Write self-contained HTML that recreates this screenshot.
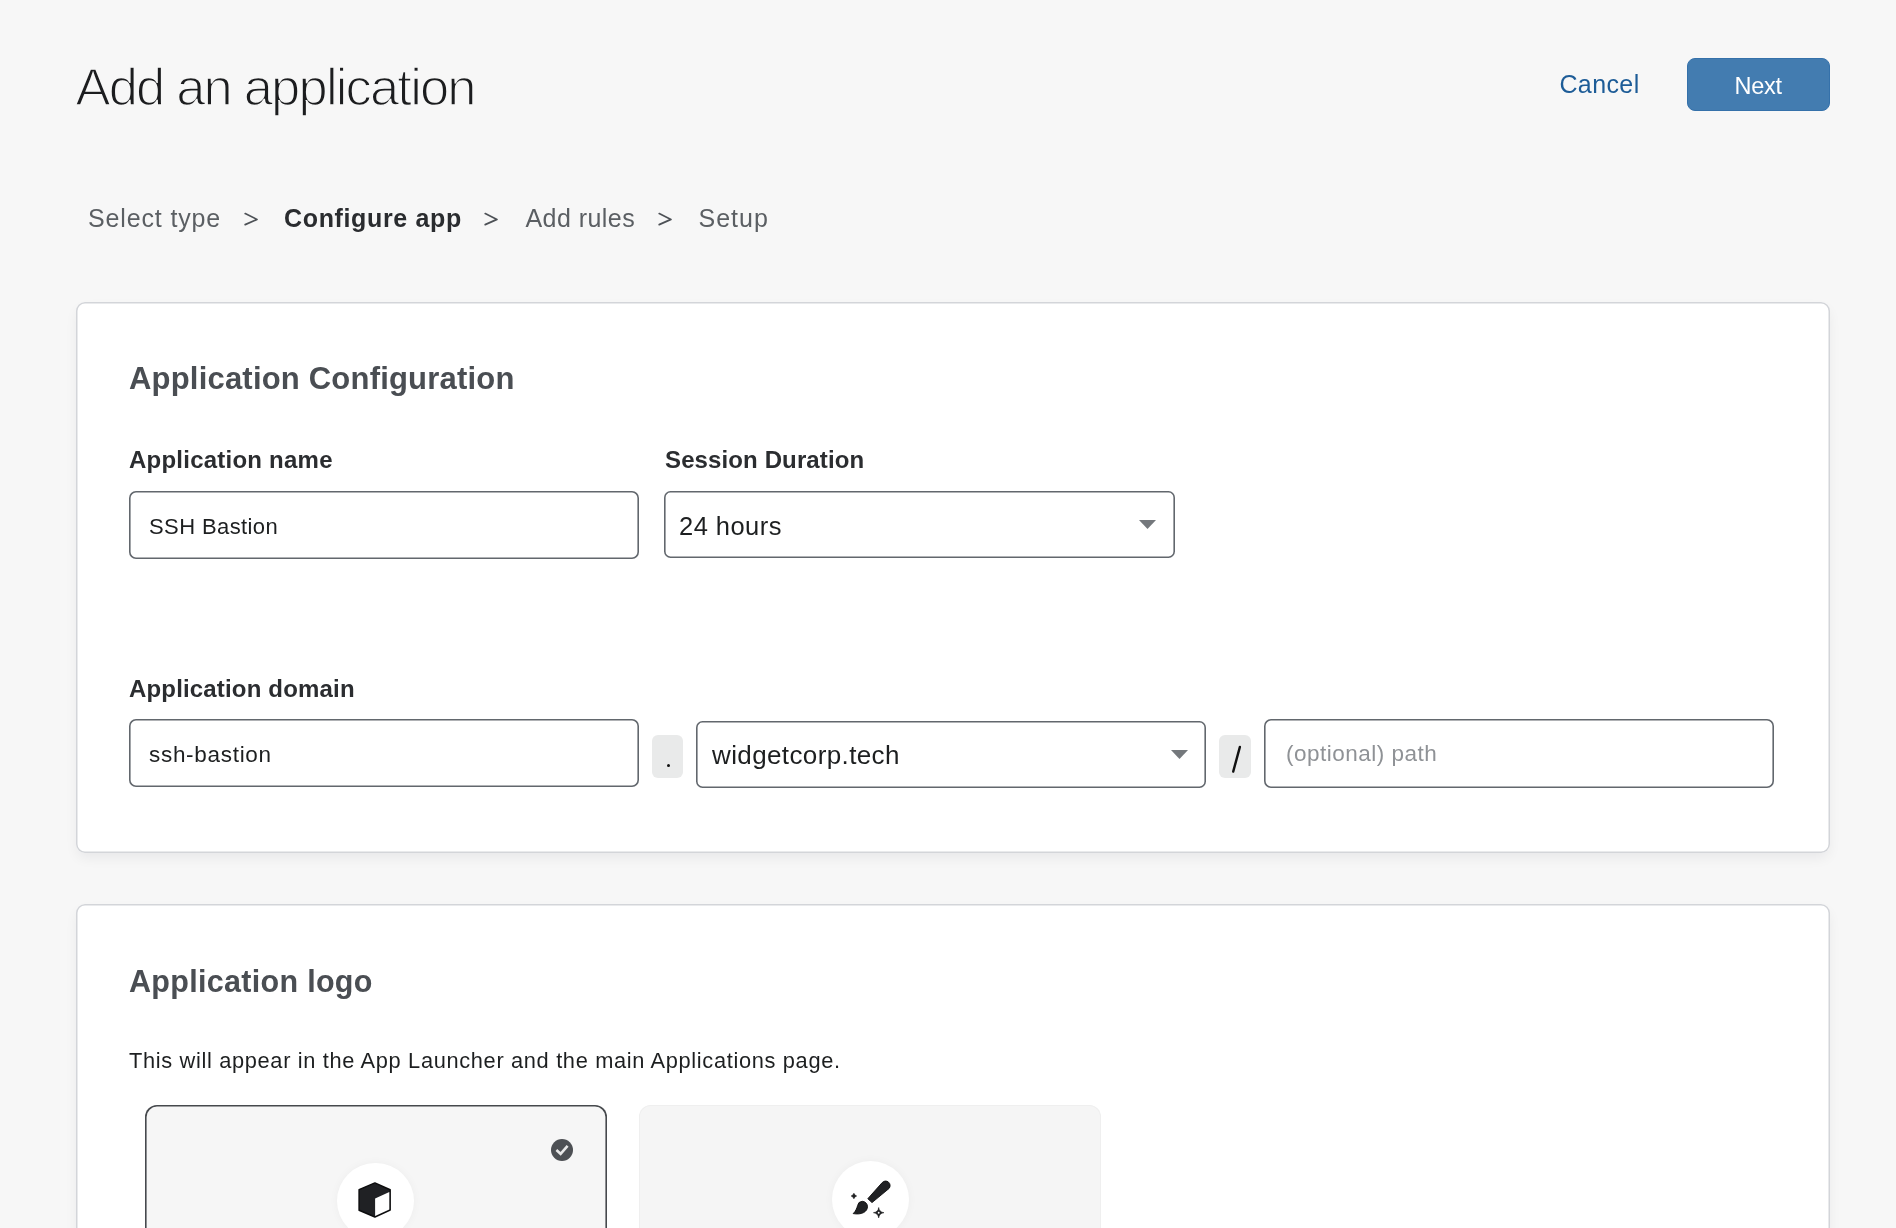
<!DOCTYPE html>
<html>
<head>
<meta charset="utf-8">
<style>
html,body{margin:0;padding:0;}
body{width:1896px;height:1228px;background:#f7f7f7;position:relative;overflow:hidden;will-change:transform;font-family:"Liberation Sans",sans-serif;}
.t{position:absolute;white-space:nowrap;line-height:1;}
.b{font-weight:bold;}
.box{position:absolute;box-sizing:border-box;}
</style>
</head>
<body>
<!-- header -->
<div class="t" id="title" style="left:75.5px;top:60.8px;font-size:52.5px;letter-spacing:-1.82px;color:#1c1d1f;-webkit-text-stroke:1.5px #f7f7f7;paint-order:normal;">Add an application</div>
<div class="t" id="cancel" style="left:1559.4px;top:72.3px;font-size:25px;letter-spacing:0.4px;color:#1d5c97;">Cancel</div>
<div class="box" id="nextbtn" style="left:1687px;top:58.3px;width:143px;height:52.6px;background:#437cb0;border:1px solid #3571aa;border-radius:8px;"></div>
<div class="t" id="next" style="left:1734.5px;top:75px;font-size:23.5px;letter-spacing:-0.25px;color:#ffffff;">Next</div>

<!-- breadcrumb -->
<div class="t" style="left:88px;top:205.6px;font-size:25px;letter-spacing:0.85px;color:#5b5f63;">Select type</div>
<svg class="box" style="left:242.9px;top:212px;" width="16" height="14" viewBox="0 0 16 14"><polyline points="2.2,1.6 14.0,7.4 2.2,12.6" fill="none" stroke="#4d5156" stroke-width="1.7" stroke-linecap="round" stroke-linejoin="round"/></svg>
<div class="t b" style="left:284px;top:205.6px;font-size:25px;letter-spacing:0.65px;color:#2a2c2f;">Configure app</div>
<svg class="box" style="left:482.7px;top:212px;" width="16" height="14" viewBox="0 0 16 14"><polyline points="2.2,1.6 14.0,7.4 2.2,12.6" fill="none" stroke="#4d5156" stroke-width="1.7" stroke-linecap="round" stroke-linejoin="round"/></svg>
<div class="t" style="left:525.5px;top:205.6px;font-size:25px;letter-spacing:0.45px;color:#5b5f63;">Add rules</div>
<svg class="box" style="left:656.7px;top:212px;" width="16" height="14" viewBox="0 0 16 14"><polyline points="2.2,1.6 14.0,7.4 2.2,12.6" fill="none" stroke="#4d5156" stroke-width="1.7" stroke-linecap="round" stroke-linejoin="round"/></svg>
<div class="t" style="left:698.5px;top:205.6px;font-size:25px;letter-spacing:1.0px;color:#5b5f63;">Setup</div>

<!-- card 1 -->
<div class="box" style="left:75.7px;top:302px;width:1754.5px;height:551px;background:#fff;border-radius:9px;box-shadow:inset 0 0 0 1.5px #d3d5d9,0 6px 14px -2px rgba(20,20,40,0.07);"></div>
<div class="t b" style="left:129px;top:362.8px;font-size:31px;letter-spacing:0.2px;color:#4a4e53;">Application Configuration</div>
<div class="t b" style="left:129px;top:447.7px;font-size:24px;letter-spacing:0.23px;color:#2b2d30;">Application name</div>
<div class="t b" style="left:665px;top:448.2px;font-size:24px;letter-spacing:0.12px;color:#2b2d30;">Session Duration</div>

<div class="box" style="left:128.5px;top:491.4px;width:510.3px;height:68px;border-radius:7px;background:#fff;box-shadow:inset 0 0 0 1.6px #62676d;"></div>
<div class="t" style="left:149px;top:515.5px;font-size:22px;letter-spacing:0.4px;color:#1d1f20;">SSH Bastion</div>

<div class="box" style="left:664.4px;top:491.3px;width:510.2px;height:66.8px;border-radius:6.5px;background:#fff;box-shadow:inset 0 0 0 1.6px #62676d;"></div>
<div class="t" style="left:679px;top:513.9px;font-size:25.5px;letter-spacing:0.46px;color:#1d1f20;">24 hours</div>
<svg class="box" style="left:1139px;top:520px;" width="17" height="9" viewBox="0 0 17 9"><polygon points="0,0 17,0 8.5,9" fill="#74787c"/></svg>

<div class="t b" style="left:129px;top:676.5px;font-size:24px;letter-spacing:0.17px;color:#2b2d30;">Application domain</div>

<div class="box" style="left:128.5px;top:719.2px;width:510.3px;height:68.2px;border-radius:7px;background:#fff;box-shadow:inset 0 0 0 1.6px #62676d;"></div>
<div class="t" style="left:149px;top:743.9px;font-size:22.5px;letter-spacing:0.7px;color:#1d1f20;">ssh-bastion</div>

<div class="box" style="left:652px;top:735px;width:31px;height:43px;background:#e9eaea;border-radius:6px;"></div>
<div class="box" style="left:666.6px;top:763.6px;width:3.6px;height:3.6px;border-radius:1.8px;background:#111;"></div>

<div class="box" style="left:695.8px;top:720.6px;width:510.4px;height:67.4px;border-radius:6.5px;background:#fff;box-shadow:inset 0 0 0 1.6px #62676d;"></div>
<div class="t" style="left:712px;top:741.8px;font-size:26px;letter-spacing:0.38px;color:#1d1f20;">widgetcorp.tech</div>
<svg class="box" style="left:1171px;top:750px;" width="17" height="9" viewBox="0 0 17 9"><polygon points="0,0 17,0 8.5,9" fill="#74787c"/></svg>

<div class="box" style="left:1218.9px;top:735.3px;width:31.8px;height:42.5px;background:#e9eaea;border-radius:6px;"></div>
<svg class="box" style="left:1218.9px;top:735.3px;" width="32" height="43" viewBox="0 0 32 43"><line x1="20.9" y1="11.9" x2="14.2" y2="36.6" stroke="#111" stroke-width="2.4" stroke-linecap="round"/></svg>

<div class="box" style="left:1263.7px;top:719.2px;width:510.5px;height:68.4px;border-radius:7px;background:#fff;box-shadow:inset 0 0 0 1.6px #62676d;"></div>
<div class="t" style="left:1286px;top:743.4px;font-size:22.5px;letter-spacing:0.5px;color:#8f9296;">(optional) path</div>

<!-- card 2 -->
<div class="box" style="left:75.7px;top:904.2px;width:1754.5px;height:400px;background:#fff;border-radius:9px;box-shadow:inset 0 0 0 1.5px #d3d5d9,0 6px 14px -2px rgba(20,20,40,0.07);"></div>
<div class="t b" style="left:129px;top:966px;font-size:30.5px;letter-spacing:0.3px;color:#4a4e53;">Application logo</div>
<div class="t" style="left:129px;top:1050.2px;font-size:21.8px;letter-spacing:0.665px;color:#1d1f20;">This will appear in the App Launcher and the main Applications page.</div>

<div class="box" style="left:144.5px;top:1105.3px;width:462.3px;height:200px;background:#f6f6f6;border-radius:12px;box-shadow:inset 0 0 0 1.6px #46494d;"></div>
<div class="box" style="left:551px;top:1139px;width:22px;height:22px;border-radius:11px;background:#4d5054;"></div>
<svg class="box" style="left:551px;top:1139px;" width="22" height="22" viewBox="0 0 22 22"><polyline points="5.4,11.1 9.6,14.8 16.6,6.8" fill="none" stroke="#e8e8e8" stroke-width="2.6"/></svg>
<div class="box" style="left:337.1px;top:1162.6px;width:76.6px;height:76.6px;border-radius:38.3px;background:#fff;box-shadow:0 0 10px rgba(0,0,0,0.04);"></div>
<svg class="box" style="left:350px;top:1175px;" width="50" height="50" viewBox="0 0 50 50">
<polygon points="24.9,7.9 9.1,14.6 9.1,35.3 24.9,42.0 40.15,35.1 40.15,14.7" fill="#202124" stroke="#0c0c0d" stroke-width="1.5" stroke-linejoin="round"/>
<polygon points="25.1,23.5 39.3,17.1 39.3,34.5 25.1,41.1" fill="#fff"/>
</svg>

<div class="box" style="left:638.6px;top:1104.6px;width:462.6px;height:200px;background:#f5f5f5;border-radius:12px;box-shadow:inset 0 0 0 1px #efefef;"></div>
<div class="box" style="left:832px;top:1161px;width:77px;height:77px;border-radius:38.5px;background:#fff;box-shadow:0 0 10px rgba(0,0,0,0.04);"></div>
<svg class="box" style="left:840px;top:1170px;" width="60" height="58" viewBox="0 0 60 58">
<g fill="#202124" stroke="#0c0c0d" stroke-width="0.9" stroke-linejoin="round">
<path d="M27.8,28.7 L42.2,12.6 A4.5,4.5 0 0 1 49.0,18.5 L32.0,32.6 Z"/>
<path d="M22.2,31.3 A5.4,5.4 0 0 1 27.5,36.8 C27.3,42 21.5,45 13.2,43.6 C15.8,41.3 16.8,38.2 17.6,35.6 A5,5 0 0 1 22.2,31.3 Z"/>
<path stroke-width="0.6" d="M13.9,23.3 Q14.5,25.4 16.6,26 Q14.5,26.6 13.9,28.7 Q13.3,26.6 11.2,26 Q13.3,25.4 13.9,23.3 Z"/>
<path stroke-width="0.5" d="M38.7,37.5 Q39.3,42.1 44.0,42.7 Q39.3,43.3 38.7,47.9 Q38.1,43.3 33.4,42.7 Q38.1,42.1 38.7,37.5 Z"/>
</g>
<circle cx="38.7" cy="42.7" r="0.95" fill="#fff"/>
</svg>
</body>
</html>
